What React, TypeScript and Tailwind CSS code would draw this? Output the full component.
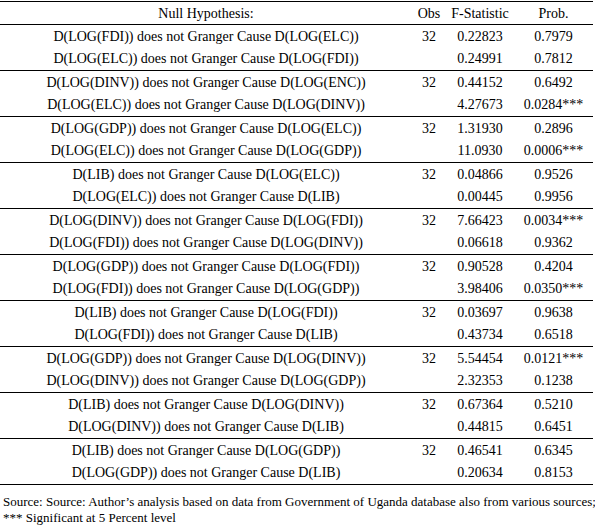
const rows: [string, string, string, string][][] = [
  [
    ['D(LOG(FDI)) does not Granger Cause D(LOG(ELC))', '32', '0.22823', '0.7979'],
    ['D(LOG(ELC)) does not Granger Cause D(LOG(FDI))', '', '0.24991', '0.7812'],
  ],
  [
    ['D(LOG(DINV)) does not Granger Cause D(LOG(ENC))', '32', '0.44152', '0.6492'],
    ['D(LOG(ELC)) does not Granger Cause D(LOG(DINV))', '', '4.27673', '0.0284***'],
  ],
  [
    ['D(LOG(GDP)) does not Granger Cause D(LOG(ELC))', '32', '1.31930', '0.2896'],
    ['D(LOG(ELC)) does not Granger Cause D(LOG(GDP))', '', '11.0930', '0.0006***'],
  ],
  [
    ['D(LIB) does not Granger Cause D(LOG(ELC))', '32', '0.04866', '0.9526'],
    ['D(LOG(ELC)) does not Granger Cause D(LIB)', '', '0.00445', '0.9956'],
  ],
  [
    ['D(LOG(DINV)) does not Granger Cause D(LOG(FDI))', '32', '7.66423', '0.0034***'],
    ['D(LOG(FDI)) does not Granger Cause D(LOG(DINV))', '', '0.06618', '0.9362'],
  ],
  [
    ['D(LOG(GDP)) does not Granger Cause D(LOG(FDI))', '32', '0.90528', '0.4204'],
    ['D(LOG(FDI)) does not Granger Cause D(LOG(GDP))', '', '3.98406', '0.0350***'],
  ],
  [
    ['D(LIB) does not Granger Cause D(LOG(FDI))', '32', '0.03697', '0.9638'],
    ['D(LOG(FDI)) does not Granger Cause D(LIB)', '', '0.43734', '0.6518'],
  ],
  [
    ['D(LOG(GDP)) does not Granger Cause D(LOG(DINV))', '32', '5.54454', '0.0121***'],
    ['D(LOG(DINV)) does not Granger Cause D(LOG(GDP))', '', '2.32353', '0.1238'],
  ],
  [
    ['D(LIB) does not Granger Cause D(LOG(DINV))', '32', '0.67364', '0.5210'],
    ['D(LOG(DINV)) does not Granger Cause D(LIB)', '', '0.44815', '0.6451'],
  ],
  [
    ['D(LIB) does not Granger Cause D(LOG(GDP))', '32', '0.46541', '0.6345'],
    ['D(LOG(GDP)) does not Granger Cause D(LIB)', '', '0.20634', '0.8153'],
  ],
];

const cols = 'grid grid-cols-[412px_34px_68px_79px] items-center text-center';

export default function App() {
  return (
    <div className="w-[595px] h-[532px] bg-white text-black font-['Liberation_Serif',serif] text-[14px] pt-px">
      <div className="w-[593px]">
        {/* Header */}
        <div className={`${cols} h-[24px] border-y border-black`}>
          <div>Null Hypothesis:</div>
          <div>Obs</div>
          <div>F-Statistic</div>
          <div>Prob.</div>
        </div>

        {rows.map((group, gi) => (
          <div key={gi} className="h-[46px] border-b border-black flex flex-col justify-center">
            {group.map((r, ri) => (
              <div key={ri} className={`${cols} h-[22px]`}>
                <div>{r[0]}</div>
                <div>{r[1]}</div>
                <div>{r[2]}</div>
                <div>{r[3]}</div>
              </div>
            ))}
          </div>
        ))}
      </div>

      {/* Footnote */}
      <div className="pl-[3px] pt-[9px] text-[13px] leading-[16px] whitespace-nowrap">
        <div>Source: Source: Author’s analysis based on data from Government of Uganda database also from various sources;</div>
        <div>*** Significant at 5 Percent level</div>
      </div>
    </div>
  );
}
